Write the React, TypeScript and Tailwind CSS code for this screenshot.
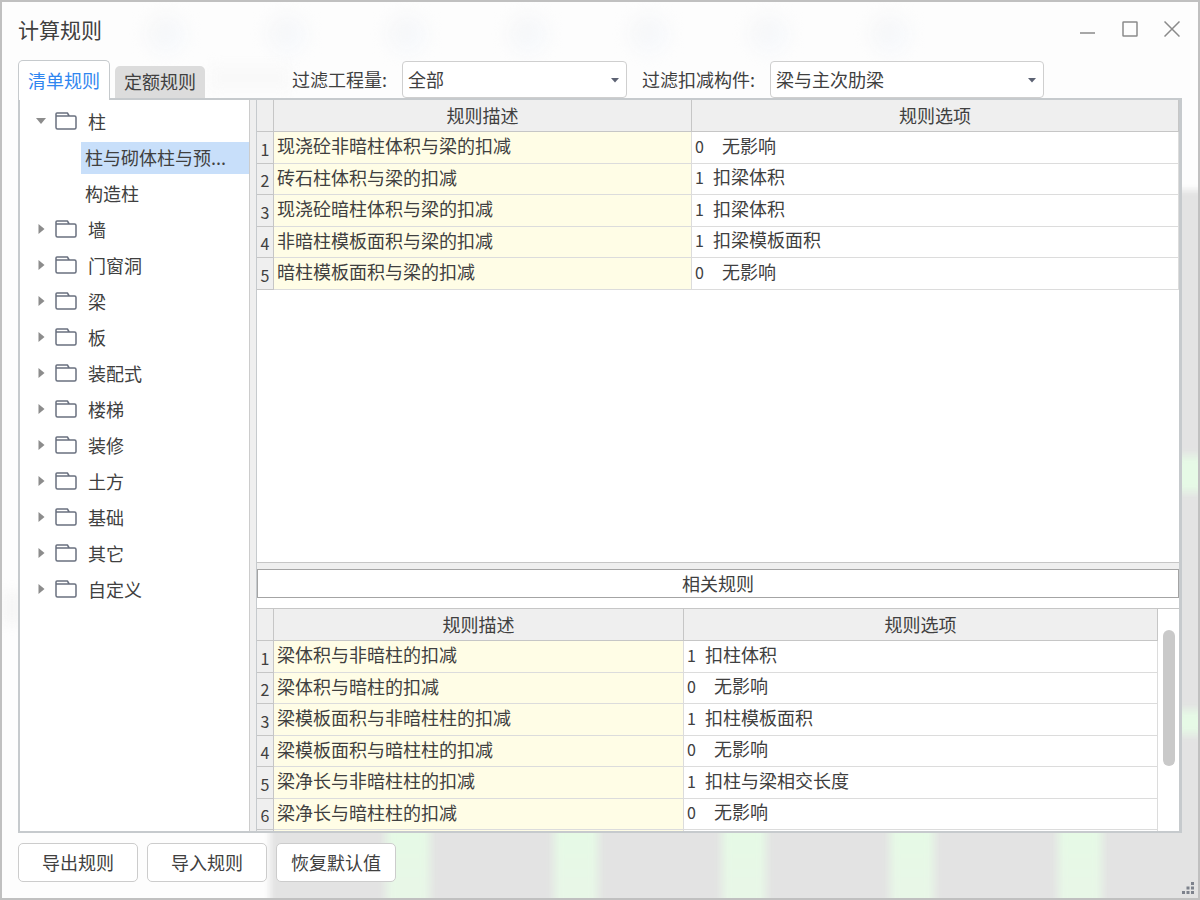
import { clsx } from "clsx";
import { useState } from "react";
import type { ReactNode } from "react";

interface TreeGroup {
  name: string;
  children?: string[];
}

interface Rule {
  description: string;
  code: number;
  option: string;
}

const TREE: TreeGroup[] = [
  { name: "柱", children: ["柱与砌体柱与预...", "构造柱"] },
  { name: "墙" },
  { name: "门窗洞" },
  { name: "梁" },
  { name: "板" },
  { name: "装配式" },
  { name: "楼梯" },
  { name: "装修" },
  { name: "土方" },
  { name: "基础" },
  { name: "其它" },
  { name: "自定义" },
];

const MAIN_RULES: Rule[] = [
  { description: "现浇砼非暗柱体积与梁的扣减", code: 0, option: "无影响" },
  { description: "砖石柱体积与梁的扣减", code: 1, option: "扣梁体积" },
  { description: "现浇砼暗柱体积与梁的扣减", code: 1, option: "扣梁体积" },
  { description: "非暗柱模板面积与梁的扣减", code: 1, option: "扣梁模板面积" },
  { description: "暗柱模板面积与梁的扣减", code: 0, option: "无影响" },
];

const RELATED_RULES: Rule[] = [
  { description: "梁体积与非暗柱的扣减", code: 1, option: "扣柱体积" },
  { description: "梁体积与暗柱的扣减", code: 0, option: "无影响" },
  { description: "梁模板面积与非暗柱柱的扣减", code: 1, option: "扣柱模板面积" },
  { description: "梁模板面积与暗柱柱的扣减", code: 0, option: "无影响" },
  { description: "梁净长与非暗柱柱的扣减", code: 1, option: "扣柱与梁相交长度" },
  { description: "梁净长与暗柱柱的扣减", code: 0, option: "无影响" },
];

const FolderIcon = () => (
  <svg
    className="h-[18px] w-[22px] shrink-0"
    viewBox="0 0 22 18"
    fill="none"
    stroke="#69707f"
    strokeWidth="1.5"
    strokeLinejoin="round"
  >
    <path d="M1 4V15.500Q1 17 2.500 17H19.500Q21 17 21 15.500V5.500Q21 4 19.500 4H14.200L12.400 1H2Q1 1 1 2V4H14.200" />
  </svg>
);

const Arrow = ({ open }: { open: boolean }) => (
  <svg className="size-3 shrink-0" viewBox="0 0 12 12" fill="#8c8c8c">
    {open ? <path d="M1 3h10L6 9z" /> : <path d="M3.500 1v10l6-5z" />}
  </svg>
);

const Backdrop = () => (
  <div aria-hidden className="absolute inset-0 -z-10 overflow-hidden bg-[#fdfdfd]">
    <div className="absolute top-3 right-72 left-36 flex justify-between blur-[8px]">
      {[0, 1, 2, 3, 4, 5, 6].map((n) => (
        <div
          key={n}
          className="h-10 w-10 rounded-full bg-linear-to-br from-[#f6f6f6] to-[#f7fafe]"
        />
      ))}
    </div>
    <div className="absolute top-16 left-52 h-6 w-20 bg-[#f9f9f9] blur-[6px]" />
    <div className="absolute top-[590px] left-0 h-8 w-5 bg-[#f6f6f6] blur-[6px]" />
    <div className="absolute top-[188px] -right-4 -bottom-4 left-[268px] bg-[#e3e3e3] blur-[3px]" />
    <div className="absolute top-[454px] -right-2 h-9 w-8 bg-[#e6fae6] blur-[4px]" />
    <div className="absolute top-[708px] -right-2 h-6 w-8 bg-[#e6fae6] blur-[4px]" />
    <div className="absolute -bottom-3 left-[384px] flex h-24 gap-[124px] blur-[4px]">
      {[0, 1, 2, 3, 4].map((n) => (
        <div key={n} className="w-11 bg-linear-to-b from-[#e5fbe5] to-[#e9f6e8]" />
      ))}
    </div>
  </div>
);

const WindowButton = ({ label, children }: { label: string; children: ReactNode }) => (
  <button
    type="button"
    aria-label={label}
    className="flex h-9 w-[42px] items-center justify-center"
  >
    <svg
      className="size-4"
      viewBox="0 0 16 16"
      fill="none"
      stroke="#8a8a8a"
      strokeWidth="1.5"
    >
      {children}
    </svg>
  </button>
);

interface FilterSelectProps {
  id: string;
  label: string;
  options: string[];
  className: string;
}

const FilterSelect = ({ id, label, options, className }: FilterSelectProps) => (
  <div className="flex items-center gap-[15px]">
    <label htmlFor={id} className="pb-[2px] whitespace-nowrap">
      {label}
    </label>
    <div className={clsx("relative", className)}>
      <select
        id={id}
        className="h-[37px] w-full appearance-none rounded-[4px] border border-[#cfcfcf] bg-white px-[5px] pb-[2px]"
      >
        {options.map((option) => (
          <option key={option}>{option}</option>
        ))}
      </select>
      <svg
        className="pointer-events-none absolute top-[15px] right-2 h-2 w-2"
        viewBox="0 0 8 8"
        fill="#5c6273"
      >
        <path d="M0 2h8L4 6.500z" />
      </svg>
    </div>
  </div>
);

interface RuleTableProps {
  rules: Rule[];
  columnClassName: string;
  hasMore?: boolean;
}

const RuleTable = ({ rules, columnClassName, hasMore = false }: RuleTableProps) => (
  <table className="w-full table-fixed border-separate border-spacing-0 text-left">
    <colgroup>
      <col className="w-[17px]" />
      <col className={columnClassName} />
      <col />
    </colgroup>
    <thead>
      <tr className="h-8 bg-[#efefef]">
        <td className="border-r border-b border-[#c6c6c6]" />
        <th className="border-r border-b border-[#c6c6c6] p-0 pb-[2px] text-center font-normal">
          规则描述
        </th>
        <th className="border-r border-b border-[#c6c6c6] p-0 pb-[2px] text-center font-normal">
          规则选项
        </th>
      </tr>
    </thead>
    <tbody>
      {rules.map((rule, index) => (
        <tr key={rule.description} className="odd:h-8 even:h-[31px]">
          <td className="border-r border-b border-[#c6c6c6] bg-[#efefef] p-0 pt-[2px] text-center text-base leading-6">
            {index + 1}
          </td>
          <td className="border-r border-b border-[#dcdcdc] bg-[#fffde6] p-0 pb-[5px] pl-[3px] whitespace-nowrap">
            {rule.description}
          </td>
          <td className="border-r border-b border-[#dcdcdc] bg-white p-0 pb-[5px] pl-[3px] whitespace-nowrap">
            <span
              className={clsx("text-base", rule.code === 0 ? "mr-[14px]" : "mr-[5px]")}
            >
              {rule.code}
            </span>{" "}
            {rule.option}
          </td>
        </tr>
      ))}
      {hasMore && (
        <tr className="h-8">
          <td className="border-r border-[#c6c6c6] bg-[#efefef]" />
          <td className="border-r border-[#dcdcdc] bg-[#fffde6]" />
          <td className="border-r border-[#dcdcdc] bg-white" />
        </tr>
      )}
    </tbody>
  </table>
);

const RuleTree = () => {
  const [selected, setSelected] = useState("柱与砌体柱与预...");
  const [expanded, setExpanded] = useState<string[]>(["柱"]);

  const toggle = (name: string) => {
    setExpanded((prev) =>
      prev.includes(name) ? prev.filter((item) => item !== name) : [...prev, name],
    );
  };

  return (
    <ul className="w-[230px] shrink-0 border-r border-[#cccccc] bg-white pt-1">
      {TREE.map((group) => {
        const open = expanded.includes(group.name);
        return (
          <li key={group.name}>
            <button
              type="button"
              onClick={() => toggle(group.name)}
              className="flex h-9 w-full items-center pb-[2px] pl-[15px]"
            >
              <Arrow open={open} />
              <span className="ml-2">
                <FolderIcon />
              </span>
              <span className="ml-[11px]">{group.name}</span>
            </button>
            {open && group.children && (
              <ul>
                {group.children.map((child) => (
                  <li key={child} className="flex h-9 items-center pl-[61px]">
                    <button
                      type="button"
                      onClick={() => setSelected(child)}
                      className={clsx(
                        "h-8 w-full pb-[2px] pl-1 text-left whitespace-nowrap",
                        selected === child && "bg-[#c8dffa]",
                      )}
                    >
                      {child}
                    </button>
                  </li>
                ))}
              </ul>
            )}
          </li>
        );
      })}
    </ul>
  );
};

const TABS = ["清单规则", "定额规则"];
const ACTIONS = ["导出规则", "导入规则", "恢复默认值"];

export default function App() {
  const [tab, setTab] = useState(TABS[0]);

  return (
    <div className="relative isolate flex min-h-screen flex-col border-2 border-[#c0c0c0] font-['Noto_Sans_CJK_SC',sans-serif] text-[18px] leading-6 text-[#404040]">
      <Backdrop />

      <header className="flex h-14 items-center justify-between pr-[5px] pb-[2px] pl-4">
        <h1 className="text-[21px]">计算规则</h1>
        <div className="flex">
          <WindowButton label="最小化">
            <path d="M0 12h15" />
          </WindowButton>
          <WindowButton label="最大化">
            <rect x="1" y="1" width="14" height="14" rx="0.5" />
          </WindowButton>
          <WindowButton label="关闭">
            <path d="M.5.5l15 15M15.500.5l-15 15" />
          </WindowButton>
        </div>
      </header>

      <div className="flex h-10 items-end px-4">
        <div role="tablist" className="flex items-end gap-[5px]">
          {TABS.map((name) => (
            <button
              key={name}
              type="button"
              role="tab"
              aria-selected={tab === name}
              onClick={() => setTab(name)}
              className={clsx(
                "rounded-t-[5px] px-[9px] pb-[2px]",
                tab === name
                  ? "relative -mb-[2px] h-10 border border-b-0 border-[#c6cacd] bg-white text-[#2f86f0]"
                  : "h-8 bg-[#dcdcdc]",
              )}
            >
              {name}
            </button>
          ))}
        </div>
        <div className="ml-[87px] flex gap-[15px]">
          <FilterSelect
            id="quantity"
            label="过滤工程量:"
            options={["全部"]}
            className="w-[225px]"
          />
          <FilterSelect
            id="component"
            label="过滤扣减构件:"
            options={["梁与主次肋梁"]}
            className="w-[274px]"
          />
        </div>
      </div>

      <main className="mx-4 flex flex-1 border-2 border-[#c6cacd] bg-[#efefef]">
        <RuleTree />
        <div className="ml-[6px] flex min-w-0 flex-1 flex-col border-x border-[#c6cacd]">
          <section className="mb-[6px] flex-1 border-b border-[#c6c6c6] bg-white">
            <RuleTable rules={MAIN_RULES} columnClassName="w-[418px]" />
          </section>
          <div className="bg-white pb-[10px]">
            <h2 className="border border-[#a4a4a4] text-center leading-[27px]">
              相关规则
            </h2>
          </div>
          <section className="flex h-[223px] overflow-hidden border-t border-[#c6c6c6] bg-white">
            <div className="min-w-0 flex-1">
              <RuleTable rules={RELATED_RULES} columnClassName="w-[410px]" hasMore />
            </div>
            <div className="w-[21px] shrink-0 pt-[21px] pl-[5px]">
              <div className="h-[136px] w-3 rounded-full bg-[#c9c9c9]" />
            </div>
          </section>
        </div>
      </main>

      <footer className="flex items-start gap-[9px] px-4 pt-[10px] pb-4">
        {ACTIONS.map((name) => (
          <button
            key={name}
            type="button"
            className="h-[39px] w-[120px] rounded-[5px] border border-[#cccccc] bg-white pb-[2px]"
          >
            {name}
          </button>
        ))}
      </footer>

      <svg
        className="absolute right-1 bottom-1 size-3"
        viewBox="0 0 12 12"
        fill="#7d828c"
      >
        <path d="M9 0h3v3H9zM4.500 4.500h3v3h-3zM9 4.500h3v3H9zM0 9h3v3H0zM4.500 9h3v3h-3zM9 9h3v3H9z" />
      </svg>
    </div>
  );
}
